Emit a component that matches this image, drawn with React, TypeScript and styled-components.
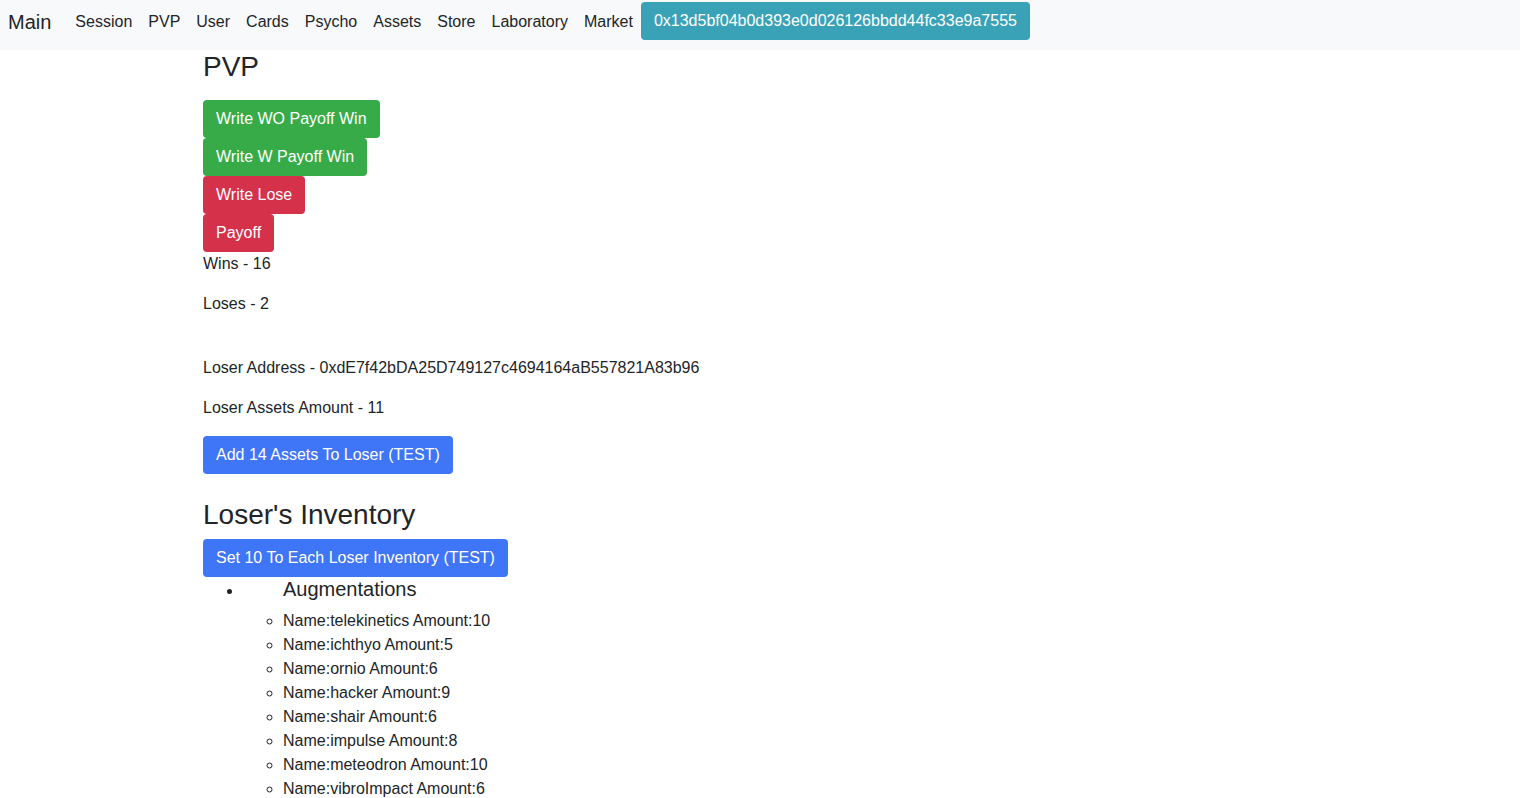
import styled, { createGlobalStyle } from "styled-components";

const GlobalStyle = createGlobalStyle`
  body {
    margin: 0;
    font-family: "Liberation Sans", Arial, sans-serif;
    font-size: 16px;
    line-height: 1.5;
    color: #212529;
    background: #fff;
  }
  * { box-sizing: border-box; }
`;

const Navbar = styled.nav`
  display: flex;
  align-items: center;
  height: 50px;
  padding: 2px 8px 10px 8px;
  background: #f8f9fa;
`;

const Brand = styled.a`
  padding-top: 2px;
  font-size: 20px;
  line-height: 30px;
  margin-right: 16px;
  color: #212529;
  text-decoration: none;
`;

const NavLink = styled.a`
  padding: 2px 8px 0;
  font-size: 16px;
  color: #212529;
  text-decoration: none;
`;

const Button = styled.button<{ $variant: "success" | "danger" | "primary" | "info" }>`
  display: block;
  padding: 6px 12px;
  font-family: inherit;
  font-size: 16px;
  line-height: 24px;
  color: #fff;
  border: 1px solid transparent;
  border-radius: 4px;
  cursor: pointer;
  background: ${(p) =>
    ({
      success: "#37ab48",
      danger: "#d5314b",
      primary: "#3f75f7",
      info: "#3aa2b6",
    })[p.$variant]};
`;

const Container = styled.main`
  max-width: 1144px;
  margin: 0 auto;
  padding: 0 15px;
`;

const Title = styled.h3<{ $top?: number }>`
  margin: ${(p) => p.$top ?? 0}px 0 8px;
  font-size: 28px;
  font-weight: 500;
  line-height: 1.2;
`;

const ButtonStack = styled.div`
  display: flex;
  flex-direction: column;
  align-items: flex-start;
  margin-top: 16px;
`;

const Text = styled.p`
  margin: 0 0 16px;
`;

const Spacer = styled.div`
  height: 24px;
`;

const List = styled.ul`
  margin: 0;
  padding-left: 40px;
  list-style: disc;
`;

const Category = styled.h5`
  margin: 0 0 8px;
  padding-left: 40px;
  font-size: 20px;
  font-weight: 500;
  line-height: 1.2;
`;

const SubList = styled.ul`
  margin: 0;
  padding-left: 40px;
  list-style: circle;
`;

const navItems = ["Session", "PVP", "User", "Cards", "Psycho", "Assets", "Store", "Laboratory", "Market"];

const inventory = [
  { name: "telekinetics", amount: 10 },
  { name: "ichthyo", amount: 5 },
  { name: "ornio", amount: 6 },
  { name: "hacker", amount: 9 },
  { name: "shair", amount: 6 },
  { name: "impulse", amount: 8 },
  { name: "meteodron", amount: 10 },
  { name: "vibroImpact", amount: 6 },
];

const App = () => {
  return (
    <>
      <GlobalStyle />
      <Navbar>
        <Brand href="#">Main</Brand>
        {navItems.map((item) => (
          <NavLink key={item} href="#">
            {item}
          </NavLink>
        ))}
        <Button $variant="info">0x13d5bf04b0d393e0d026126bbdd44fc33e9a7555</Button>
      </Navbar>
      <Container>
        <Title>PVP</Title>
        <ButtonStack>
          <Button $variant="success">Write WO Payoff Win</Button>
          <Button $variant="success">Write W Payoff Win</Button>
          <Button $variant="danger">Write Lose</Button>
          <Button $variant="danger">Payoff</Button>
        </ButtonStack>
        <Text>Wins - 16</Text>
        <Text>Loses - 2</Text>
        <Spacer />
        <Text>Loser Address - 0xdE7f42bDA25D749127c4694164aB557821A83b96</Text>
        <Text>Loser Assets Amount - 11</Text>
        <Button $variant="primary">Add 14 Assets To Loser (TEST)</Button>
        <Title $top={24}>Loser's Inventory</Title>
        <Button $variant="primary">Set 10 To Each Loser Inventory (TEST)</Button>
        <List>
          <li>
            <Category>Augmentations</Category>
            <SubList>
              {inventory.map((it) => (
                <li key={it.name}>
                  Name:{it.name} Amount:{it.amount}
                </li>
              ))}
            </SubList>
          </li>
        </List>
      </Container>
    </>
  );
};

export default App;
